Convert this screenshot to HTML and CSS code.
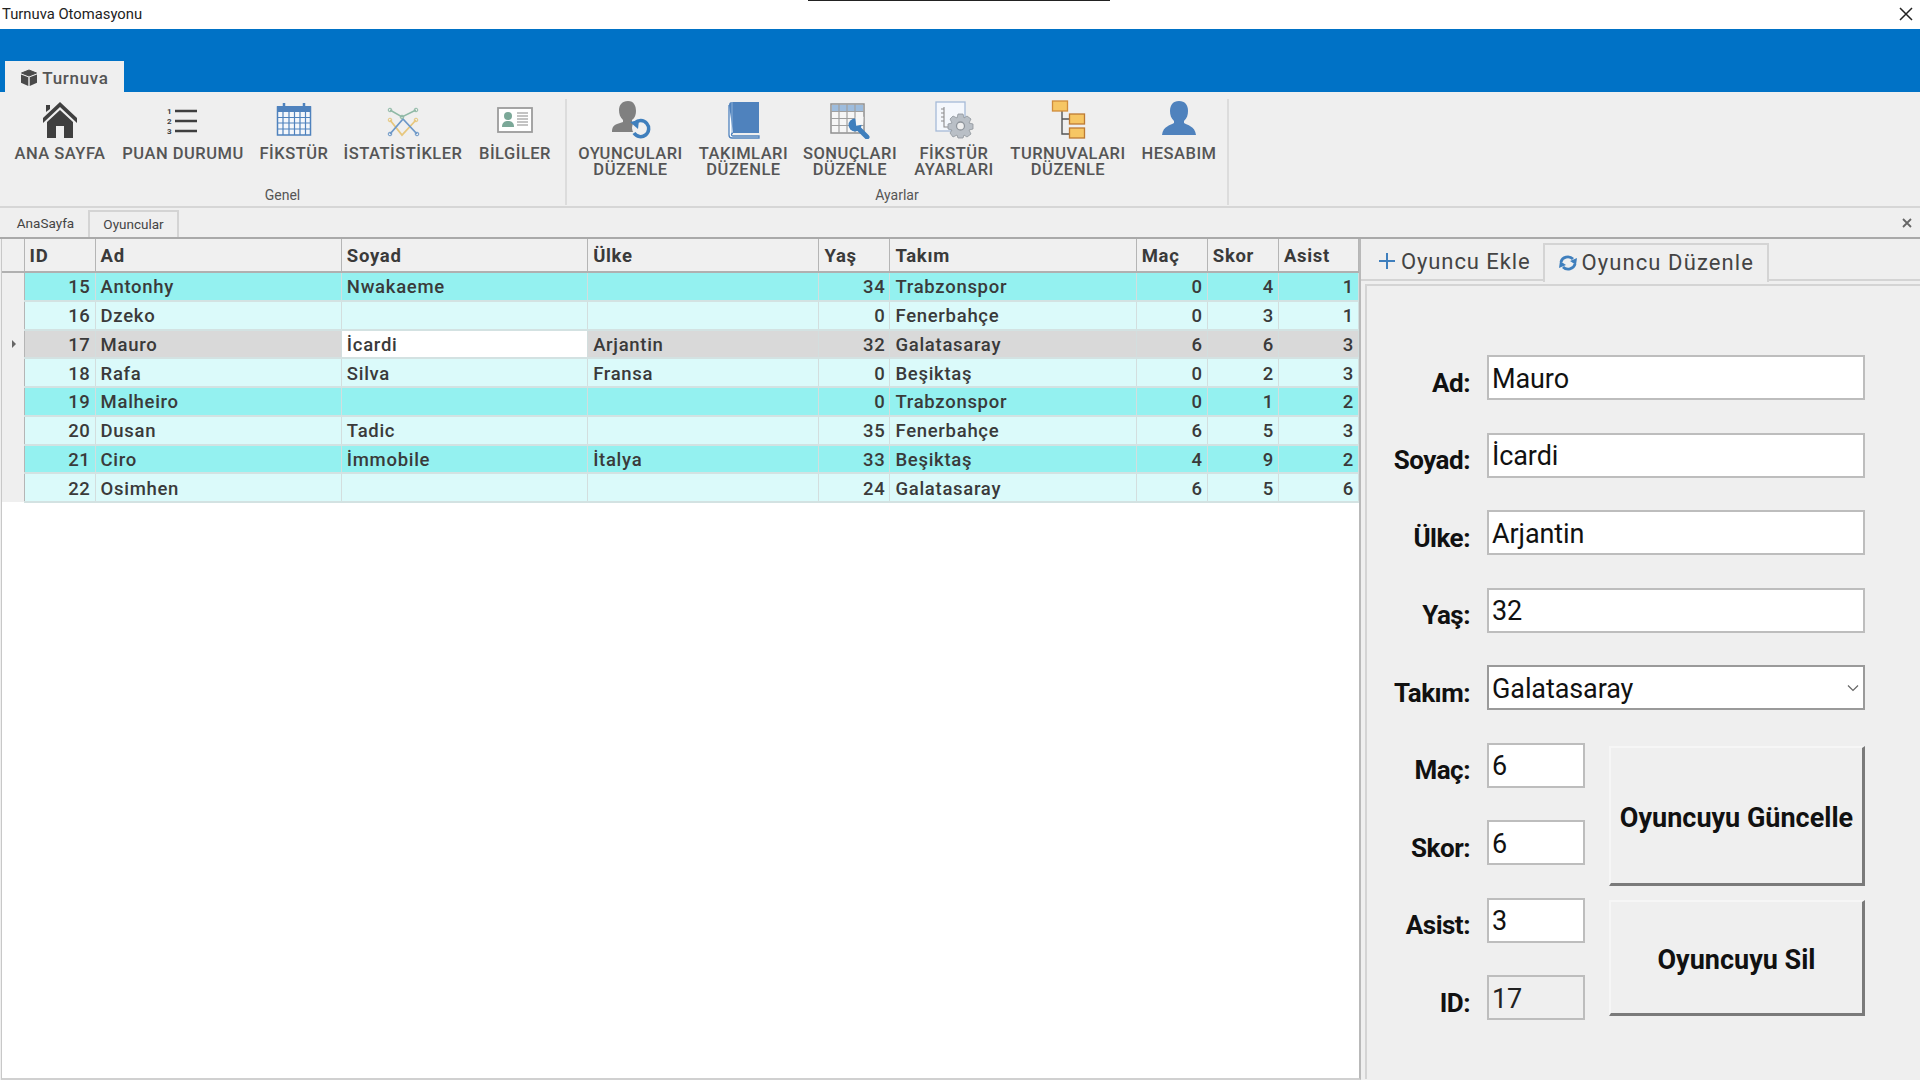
FILE: index.html
```html
<!DOCTYPE html>
<html lang="tr">
<head>
    <meta charset="UTF-8">
    <title>Turnuva Otomasyonu</title>
    <link rel="stylesheet" href="styles.css">
</head>
<body>
    <div class="titlebar">
        <span class="title">Turnuva Otomasyonu</span>
        <span class="caption-mark"></span>
        <svg class="close-icon" width="16" height="16" viewBox="0 0 16 16"><path d="M2 2l12 12M14 2L2 14" stroke="#222" stroke-width="1.500"/></svg>
    </div>

    <!-- Ribbon -->
    <div class="ribbon-head">
        <div class="ribbon-tab">
            <svg width="18" height="18" viewBox="0 0 18 18"><path d="M9 1l7.500 3L9 7 1.500 4z" fill="#4a4a4a" stroke="#4a4a4a" stroke-linejoin="round"/><path d="M1 5.500l7.300 2.800V17L1 13.800zM17 5.500L9.700 8.300V17l7.300-3.200z" fill="#4a4a4a"/></svg>
            Turnuva
        </div>
    </div>
    <div class="ribbon">
        <div class="ribbon-group group-genel">
            <div class="ribbon-items">
                <div class="ribbon-item">
                    <svg width="40" height="40" viewBox="0 0 40 40"><path d="M6 6h4v4l-4 3z" fill="#3f3f3f"/><path d="M20 3L37 19v5L20 8 3 24v-5z" fill="#3f3f3f"/><path d="M20 11L33 23v16H24V27h-8v12H7V23z" fill="#3f3f3f"/></svg>
                    <span>ANA SAYFA</span>
                </div>
                <div class="ribbon-item">
                    <svg width="40" height="40" viewBox="0 0 40 40">
                        <path d="M12 12h22M12 22h22M12 32h22" stroke="#3f3f3f" stroke-width="2.400"/>
                        <text x="4" y="15" class="icon-digit">1</text><text x="4" y="25" class="icon-digit">2</text><text x="4" y="35" class="icon-digit">3</text>
                    </svg>
                    <span>PUAN DURUMU</span>
                </div>
                <div class="ribbon-item">
                    <svg width="40" height="40" viewBox="0 0 40 40">
                        <rect x="3.500" y="8" width="33" height="28" fill="#f4f7fb" stroke="#4f82bd" stroke-width="1.500"/>
                        <rect x="3" y="7" width="34" height="6" fill="#4f82bd"/>
                        <path d="M10 4v5M30 4v5" stroke="#4f82bd" stroke-width="2.500"/>
                        <path d="M9 13v23M15 13v23M20.500 13v23M26 13v23M31.500 13v23M4 18.500h32M4 24h32M4 30h32" stroke="#4f82bd" stroke-width="1.200"/>
                    </svg>
                    <span>FİKSTÜR</span>
                </div>
                <div class="ribbon-item">
                    <svg width="40" height="40" viewBox="0 0 40 40" fill="none">
                        <path d="M7 11l12 7 14-7" stroke="#8fb9a6" stroke-width="1.500"/>
                        <path d="M7 21l12 15 14-15" stroke="#e7c77d" stroke-width="1.800"/>
                        <path d="M7 35l13-15 14 15" stroke="#6d98c8" stroke-width="1.800"/>
                        <circle cx="7" cy="11" r="1.800" stroke="#8fb9a6"/><circle cx="19" cy="18" r="1.800" stroke="#8fb9a6"/><circle cx="33" cy="11" r="1.800" stroke="#8fb9a6"/>
                        <circle cx="7" cy="21" r="1.800" stroke="#e7c77d"/><circle cx="33" cy="21" r="1.800" stroke="#e7c77d"/>
                        <circle cx="7" cy="35" r="1.800" stroke="#6d98c8"/><circle cx="34" cy="35" r="1.800" stroke="#6d98c8"/>
                    </svg>
                    <span>İSTATİSTİKLER</span>
                </div>
                <div class="ribbon-item">
                    <svg width="40" height="40" viewBox="0 0 40 40">
                        <rect x="3" y="9" width="34" height="24" fill="#fff" stroke="#9c9c9c" stroke-width="1.800"/>
                        <circle cx="13" cy="17" r="4" fill="#7ba898"/><path d="M7 28c0-5 3-6 6-6s6 1 6 6z" fill="#7ba898"/>
                        <path d="M22 14h11M22 17h11M22 20h11M22 23h11M22 26h11" stroke="#8a8a8a" stroke-width="1.100"/>
                    </svg>
                    <span>BİLGİLER</span>
                </div>
            </div>
            <div class="group-name">Genel</div>
        </div>
        <div class="ribbon-group group-ayarlar">
            <div class="ribbon-items">
                <div class="ribbon-item">
                    <svg width="40" height="40" viewBox="0 0 40 40">
                        <path d="M17 2c6 0 8 5 8 10 0 3-1 7-4 9v3c2 1 4 2 6 3v6H1c0-5 2-7 5-8l6-2v-2c-3-3-4-6-4-10 0-5 3-9 9-9z" fill="#808080"/>
                        <circle cx="29" cy="29" r="8" fill="#efefef"/>
                        <path d="M24 24a8 8 0 1 1-1 10" fill="none" stroke="#3f7fbd" stroke-width="3.500"/>
                        <path d="M19 23l9-2-1 9z" fill="#3f7fbd"/>
                    </svg>
                    <span>OYUNCULARI<br>DÜZENLE</span>
                </div>
                <div class="ribbon-item">
                    <svg width="40" height="40" viewBox="0 0 40 40">
                        <path d="M5 6c0-2 1-3 3-3h27v31H9c-2 0-4 1-4 3z" fill="#4f82bd"/>
                        <path d="M5 6v30c0 2 1 3 3 3h27v-2H9c-2 0-2-3 0-3" fill="#fff" stroke="#4f82bd" stroke-width="1.300"/>
                        <path d="M8 3v31" stroke="#8db0d8" stroke-width="1"/>
                    </svg>
                    <span>TAKIMLARI<br>DÜZENLE</span>
                </div>
                <div class="ribbon-item">
                    <svg width="40" height="40" viewBox="0 0 40 40">
                        <rect x="1" y="5" width="33" height="29" fill="#f6f6f6" stroke="#909090" stroke-width="1.500"/>
                        <rect x="2" y="6" width="31" height="6" fill="#9dbcdd"/>
                        <path d="M9 5v29M17 5v29M25 5v29M1 12.500h33M1 19.500h33M1 26.500h33" stroke="#a0a0a0" stroke-width="1.200"/>
                        <circle cx="25" cy="26" r="6.500" fill="#3f7fbd"/>
                        <path d="M25 26l12 12" stroke="#3f7fbd" stroke-width="5" stroke-linecap="round"/>
                        <path d="M27 18l-2 8 7 1 3-7z" fill="#f6f6f6" transform="rotate(-20 28 23)"/>
                    </svg>
                    <span>SONUÇLARI<br>DÜZENLE</span>
                </div>
                <div class="ribbon-item">
                    <svg width="40" height="40" viewBox="0 0 40 40">
                        <rect x="2" y="3" width="29" height="29" fill="#f4f7fc" stroke="#a6bad8" stroke-width="1.300"/>
                        <path d="M10 8v20h9M10 10h-3M10 14h-3M10 18h-3M10 22h-3" fill="none" stroke="#8c8c8c" stroke-width="1.100"/>
                        <path d="M24 15h5l1 4 3-2 4 3-2 4 4 1v5l-4 1 2 4-4 3-3-2-1 3h-5l-1-3-4 2-3-4 2-3-4-1v-5l4-1-2-4 3-3 4 2z" fill="#b9bfc6" stroke="#8f959c" stroke-width=".8"/>
                        <circle cx="26.500" cy="27" r="4" fill="#efefef" stroke="#8f959c" stroke-width="1.300"/>
                    </svg>
                    <span>FİKSTÜR<br>AYARLARI</span>
                </div>
                <div class="ribbon-item">
                    <svg width="40" height="40" viewBox="0 0 40 40">
                        <path d="M14 10v25h8M14 20h8" fill="none" stroke="#555" stroke-width="1.400"/>
                        <rect x="4.500" y="2" width="15" height="10" fill="#f6c664" stroke="#cf8c3b" stroke-width="1.300"/>
                        <rect x="21.500" y="15" width="15" height="10" fill="#f6c664" stroke="#bd7a33" stroke-width="1.300"/>
                        <rect x="21.500" y="29" width="15" height="10" fill="#f6c664" stroke="#bd7a33" stroke-width="1.300"/>
                    </svg>
                    <span>TURNUVALARI<br>DÜZENLE</span>
                </div>
                <div class="ribbon-item">
                    <svg width="40" height="40" viewBox="0 0 40 40">
                        <path d="M20 2c6 0 9 4 9 10 0 4-1 7-4 10v2c3 2 11 3 12 12H3c1-9 9-10 12-12v-2c-3-3-4-6-4-10C11 6 14 2 20 2z" fill="#4f82bd"/>
                    </svg>
                    <span>HESABIM</span>
                </div>
            </div>
            <div class="group-name">Ayarlar</div>
        </div>
    </div>

    <!-- Document tabs -->
    <div class="doc-tabs">
        <div class="doc-tab">AnaSayfa</div>
        <div class="doc-tab active">Oyuncular</div>
        <svg class="doc-close" width="12" height="12" viewBox="0 0 12 12"><path d="M2 2l8 8M10 2l-8 8" stroke="#666" stroke-width="1.800"/></svg>
    </div>

    <div class="main">
        <div class="grid-wrap">
            <table class="players">
                <colgroup>
                    <col class="c-head"><col class="c-id"><col class="c-wide"><col class="c-wide"><col class="c-ulke">
                    <col class="c-yas"><col class="c-wide"><col class="c-num"><col class="c-num"><col class="c-asist">
                </colgroup>
                <thead>
                    <tr><th></th><th>ID</th><th>Ad</th><th>Soyad</th><th>Ülke</th><th>Yaş</th><th>Takım</th><th>Maç</th><th>Skor</th><th>Asist</th></tr>
                </thead>
                <tbody id="rows"></tbody>
            </table>
        </div>

        <div class="side">
            <div class="side-tabs">
                <div class="side-tab">
                    <svg width="20" height="20" viewBox="0 0 20 20"><path d="M10 2v16M2 10h16" stroke="#3f7fbd" stroke-width="2"/></svg>
                    Oyuncu Ekle
                </div>
                <div class="side-tab active">
                    <svg width="20" height="18" viewBox="0 0 20 18" fill="none"><path d="M3 8a7 6.500 0 0 1 12-3" stroke="#3f7fbd" stroke-width="2.800"/><path d="M17 10a7 6.500 0 0 1-12 3" stroke="#3f7fbd" stroke-width="2.800"/><path d="M12 7l7-3-1 7zM8 11l-7 3 1-7z" fill="#3f7fbd"/></svg>
                    Oyuncu Düzenle
                </div>
            </div>
            <div class="side-body">
                <div class="form">
                    <label>Ad:</label><input type="text" value="Mauro">
                    <label>Soyad:</label><input type="text" value="İcardi">
                    <label>Ülke:</label><input type="text" value="Arjantin">
                    <label>Yaş:</label><input type="text" value="32">
                    <label>Takım:</label>
                    <div class="select-box">
                        <select><option>Galatasaray</option></select>
                        <svg width="12" height="8" viewBox="0 0 12 8" fill="none"><path d="M1 1.500l5 5 5-5" stroke="#666" stroke-width="1.200"/></svg>
                    </div>
                </div>
                <div class="form-bottom">
                    <div class="form small">
                        <label>Maç:</label><input type="text" value="6">
                        <label>Skor:</label><input type="text" value="6">
                        <label>Asist:</label><input type="text" value="3">
                        <label>ID:</label><input type="text" value="17" class="locked" disabled>
                    </div>
                    <div class="buttons">
                        <button class="btn-update">Oyuncuyu Güncelle</button>
                        <button class="btn-delete">Oyuncuyu Sil</button>
                    </div>
                </div>
            </div>
        </div>
    </div>

    <script>
        var players = [
            [15, 'Antonhy', 'Nwakaeme', '', 34, 'Trabzonspor', 0, 4, 1, 'hot'],
            [16, 'Dzeko', '', '', 0, 'Fenerbahçe', 0, 3, 1, ''],
            [17, 'Mauro', 'İcardi', 'Arjantin', 32, 'Galatasaray', 6, 6, 3, 'selected'],
            [18, 'Rafa', 'Silva', 'Fransa', 0, 'Beşiktaş', 0, 2, 3, ''],
            [19, 'Malheiro', '', '', 0, 'Trabzonspor', 0, 1, 2, 'hot'],
            [20, 'Dusan', 'Tadic', '', 35, 'Fenerbahçe', 6, 5, 3, ''],
            [21, 'Ciro', 'İmmobile', 'İtalya', 33, 'Beşiktaş', 4, 9, 2, 'hot'],
            [22, 'Osimhen', '', '', 24, 'Galatasaray', 6, 5, 6, '']
        ];
        var numeric = [0, 4, 6, 7, 8];
        var html = '';
        players.forEach(function (p) {
            html += '<tr class="' + p[9] + '"><th class="row-head"></th>';
            for (var i = 0; i < 9; i++) {
                var cls = numeric.indexOf(i) >= 0 ? 'num' : '';
                if (p[9] === 'selected' && i === 2) cls = 'current';
                html += '<td class="' + cls + '">' + p[i] + '</td>';
            }
            html += '</tr>';
        });
        document.getElementById('rows').innerHTML = html;
    </script>
</body>
</html>
```

FILE: styles.css
```css
* {
    box-sizing: border-box;
}
html, body {
    height: 100%;
}
body {
    margin: 0;
    background: #efefef;
    font-family: Roboto, "Liberation Sans", sans-serif;
    color: #333;
    overflow: hidden;
}

/* Title bar */
.titlebar {
    position: relative;
    height: 29px;
    background: #fff;
    display: flex;
    align-items: center;
    justify-content: space-between;
    padding: 0 6px 2px 2px;
}
.title {
    font-size: 14.800px;
    color: #222;
}
.caption-mark {
    position: absolute;
    left: 808px;
    top: 0;
    width: 302px;
    height: 1px;
    background: #222;
}

/* Ribbon */
.ribbon-head {
    height: 63px;
    background: #0072c6;
    display: flex;
    align-items: flex-end;
    padding-left: 5px;
}
.ribbon-tab {
    width: 119px;
    height: 31px;
    background: #efefef;
    display: flex;
    align-items: center;
    justify-content: center;
    gap: 4px;
    font-size: 17px;
    font-weight: 500;
    letter-spacing: .7px;
    color: #555;
    padding-top: 2px;
}
.ribbon {
    height: 116px;
    display: flex;
    padding-left: 6px;
    border-bottom: 2px solid #d6d6d6;
}
.ribbon-group {
    height: 106px;
    margin-top: 7px;
    border-right: 2px solid #dcdcdc;
}
.group-genel {
    width: 561px;
}
.group-ayarlar {
    width: 662px;
}
.ribbon-items {
    display: grid;
    height: 88px;
}
.group-genel .ribbon-items {
    grid-template-columns: 108px 138px 84px 134px 90px;
}
.group-ayarlar .ribbon-items {
    padding-left: 3px;
    grid-template-columns: 121px 105px 108px 100px 128px 94px;
}
.ribbon-item {
    display: flex;
    flex-direction: column;
    align-items: center;
    text-align: center;
    font-size: 16.500px;
    line-height: 16px;
    font-weight: 500;
    letter-spacing: .5px;
    color: #555;
    white-space: nowrap;
}
.ribbon-item span {
    margin-top: 7px;
}
.icon-digit {
    font-size: 8px;
    font-weight: 700;
    fill: #3f3f3f;
}
.group-name {
    text-align: center;
    font-size: 14px;
    line-height: 17px;
    color: #555;
}
.group-genel .group-name {
    padding-right: 6px;
}

/* Document tabs */
.doc-tabs {
    height: 31px;
    display: flex;
    align-items: flex-end;
    padding-left: 3px;
    border-bottom: 2px solid #a9a9a9;
    position: relative;
}
.doc-tab {
    width: 85px;
    height: 27px;
    text-align: center;
    font-size: 13.500px;
    line-height: 27px;
    color: #444;
}
.doc-tab.active {
    width: 91px;
    line-height: 25px;
    border: 2px solid #d4d4d4;
    border-bottom: 0;
}
.doc-close {
    position: absolute;
    right: 7px;
    top: 9px;
}

/* Main area */
.main {
    display: flex;
    height: 841px;
}
.grid-wrap {
    width: 1360px;
    margin-left: 1px;
    background: #fff;
    border-left: 1px solid #c8c8c8;
    border-right: 2px solid #b9b9b9;
    border-bottom: 2px solid #d0d0d0;
}
.players {
    width: 1357px;
    table-layout: fixed;
    border-collapse: collapse;
    font-size: 18.500px;
    font-weight: 500;
    letter-spacing: .7px;
    color: #3a3a3a;
}
.c-head { width: 22px; }
.c-id { width: 71px; }
.c-wide { width: 246px; }
.c-ulke { width: 231px; }
.c-yas { width: 71px; }
.c-num { width: 71px; }
.c-asist { width: 80px; }
.players thead th {
    height: 33px;
    padding: 2px 5px 0 5px;
    background: #f0f0f0;
    border-right: 1px solid #b5b5b5;
    border-bottom: 2px solid #b0b0b0;
    text-align: left;
    font-weight: 700;
    font-size: 18.500px;
}
.players tbody tr {
    background: #dbfafa;
}
.players tbody tr.hot {
    background: #94f1f0;
}
.players tbody tr.selected {
    background: #d9d9d9;
}
.players td {
    height: 28.750px;
    padding: 2px 4px 0 5px;
    border-right: 1px solid #d3dede;
    border-bottom: 2px solid #d3e2e2;
    white-space: nowrap;
    overflow: hidden;
}
.players td.num {
    text-align: right;
}
.players td.current {
    background: #fff;
}
.players tbody .row-head {
    background: #efefef;
    border-right: 1px solid #b5b5b5;
    padding: 0;
    position: relative;
}
.selected .row-head::after {
    content: "";
    position: absolute;
    left: 10px;
    top: 10px;
    border-left: 4px solid #666;
    border-top: 4px solid transparent;
    border-bottom: 4px solid transparent;
}

/* Side panel */
.side {
    flex: 1;
    display: flex;
    flex-direction: column;
    padding-top: 4px;
}
.side-tabs {
    height: 38px;
    display: flex;
    padding-left: 1px;
    border-bottom: 2px solid #d4d4d4;
}
.side-tab {
    display: flex;
    align-items: center;
    gap: 4px;
    height: 36px;
    padding: 0 0 0 15px;
    font-size: 22px;
    letter-spacing: .9px;
    color: #444;
    width: 180.500px;
}
.side-tab.active {
    height: 39px;
    width: 226px;
    border: 2px solid #d4d4d4;
    border-bottom: 0;
    background: #efefef;
    padding: 0 0 2px 13px;
    letter-spacing: 1.100px;
}
.side-body {
    flex: 1;
    margin: 3px 0 1px 4px;
    border-top: 2px solid #d4d4d4;
    border-left: 2px solid #d4d4d4;
    padding: 69px 0 0 0;
}
.form {
    display: grid;
    grid-template-columns: 103px 377.500px;
    column-gap: 17px;
    row-gap: 32.500px;
    align-items: center;
}
.form label {
    text-align: right;
    font-size: 26px;
    font-weight: 700;
    color: #111;
    padding-top: 10px;
    letter-spacing: -.5px;
}
.form input,
.form select {
    width: 100%;
    height: 45px;
    padding: 2px 3px 0 3px;
    border: 2px solid #bdbdbd;
    background: #fff;
    font-family: inherit;
    font-size: 27px;
    letter-spacing: -.1px;
    color: #111;
    outline: none;
    border-radius: 0;
}
.form select {
    appearance: none;
    border-color: #9a9a9a;
}
.select-box {
    position: relative;
}
.select-box svg {
    position: absolute;
    right: 6px;
    top: 19px;
}
.form-bottom {
    display: flex;
    margin-top: 32.500px;
}
.form.small {
    grid-template-columns: 103px 98px;
}
.form .locked {
    background: #efefef;
    color: #222;
    -webkit-text-fill-color: #222;
    opacity: 1;
}
.buttons {
    display: flex;
    flex-direction: column;
    gap: 14px;
    margin: 3px 0 0 24px;
}
.buttons button {
    width: 256px;
    background: #efefef;
    border: 2px solid #f6f6f6;
    border-right: 3px solid #7a7a7a;
    border-bottom: 3px solid #7a7a7a;
    font-family: inherit;
    font-size: 27px;
    font-weight: 700;
    color: #111;
    padding: 6px 0 0;
}
.btn-update {
    height: 140px;
}
.btn-delete {
    height: 116px;
}
```
